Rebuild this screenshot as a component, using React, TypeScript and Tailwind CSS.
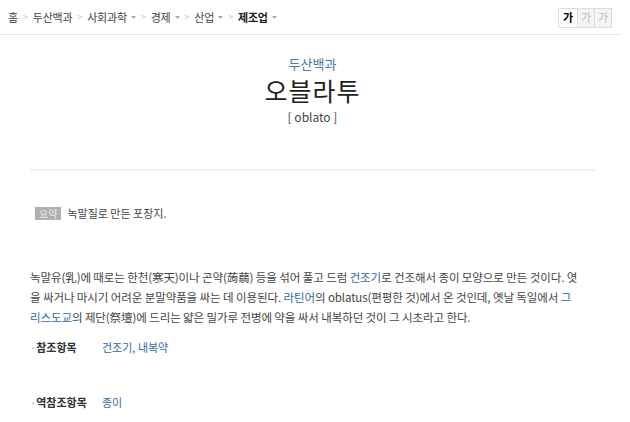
import React from "react";

const font = { fontFamily: '"Noto Sans CJK KR", "Noto Sans", sans-serif' };

function Sep() {
  return <span className="mx-[5px] text-[9px] text-[#c4c4c4]">&gt;</span>;
}

function Caret() {
  return (
    <svg width="5" height="3" viewBox="0 0 5 3" className="ml-[4px] mt-[1px]">
      <path d="M0 0h5L2.5 3z" fill="#a8a8a8" />
    </svg>
  );
}

export default function App() {
  return (
    <div className="w-[630px] h-[422px] bg-white text-[#333] overflow-hidden" style={font}>
      <div className="flex items-center justify-between h-[35px] border-b border-[#e6e6e6] mr-[8px] pl-[8px] pr-[10px]">
        <div className="flex items-center text-[11px] text-[#444] tracking-[-0.2px]">
          <span>홈</span>
          <Sep />
          <span>두산백과</span>
          <Sep />
          <span>사회과학</span>
          <Caret />
          <Sep />
          <span>경제</span>
          <Caret />
          <Sep />
          <span>산업</span>
          <Caret />
          <Sep />
          <span className="font-bold text-[#222]">제조업</span>
          <Caret />
        </div>
        <div className="flex border border-[#ddd] bg-[#f4f4f4] text-[11px] h-[20px] mt-[1px]">
          <span className="w-[18px] flex items-center justify-center bg-white font-bold text-black">가</span>
          <span className="w-[17px] flex items-center justify-center border-l border-[#ddd] text-[#bbb]">가</span>
          <span className="w-[17px] flex items-center justify-center border-l border-[#ddd] text-[#bbb]">가</span>
        </div>
      </div>

      <div className="px-[30px]">
        <div className="flex flex-col items-center pt-[20px] pb-[43px] border-b-2 border-[#f0f0f0] mr-[5px]">
          <div className="text-[13px] text-[#4a7aa8] leading-[18px]">두산백과</div>
          <div className="text-[25px] text-[#222] leading-[28px] mt-[3px] tracking-[1px]">오블라투</div>
          <div className="text-[12px] text-[#444] leading-[18px] mt-[4px]">[ oblato ]</div>
        </div>

        <div className="flex items-center mt-[34px] pl-[5px]">
          <span className="bg-[#b0b0b0] text-[#e8e8e8] text-[10px] leading-[13px] px-[4px]">요약</span>
          <span className="ml-[6px] text-[11px] text-[#444]">녹말질로 만든 포장지.</span>
        </div>

        <div className="mt-[45px] text-[11.5px] leading-[20px] text-[#444] whitespace-nowrap tracking-[-0.1px]">
          <div>
            녹말유(乳)에 때로는 한천(寒天)이나 곤약(蒟蒻) 등을 섞어 풀고 드럼{" "}
            <span className="text-[#2d6aa3]">건조기</span>로 건조해서 종이 모양으로 만든 것이다. 엿
          </div>
          <div>
            을 싸거나 마시기 어려운 분말약품을 싸는 데 이용된다.{" "}
            <span className="text-[#2d6aa3]">라틴어</span>의 oblatus(편평한 것)에서 온 것인데, 옛날 독일에서{" "}
            <span className="text-[#2d6aa3]">그</span>
          </div>
          <div>
            <span className="text-[#2d6aa3]">리스도교</span>의 제단(祭壇)에 드리는 얇은 밀가루 전병에 약을 싸서 내복하던 것이 그 시초라고 한다.
          </div>
        </div>

        <div className="flex items-center mt-[12px] text-[11px]">
          <span className="w-[72px] font-bold text-[#333]">
            <span className="text-[#999] font-normal">·</span>참조항목
          </span>
          <span className="text-[#2d6aa3]">건조기, 내복약</span>
        </div>

        <div className="flex items-center mt-[39px] text-[11px]">
          <span className="w-[72px] font-bold text-[#333]">
            <span className="text-[#999] font-normal">·</span>역참조항목
          </span>
          <span className="text-[#2d6aa3]">종이</span>
        </div>
      </div>
    </div>
  );
}
